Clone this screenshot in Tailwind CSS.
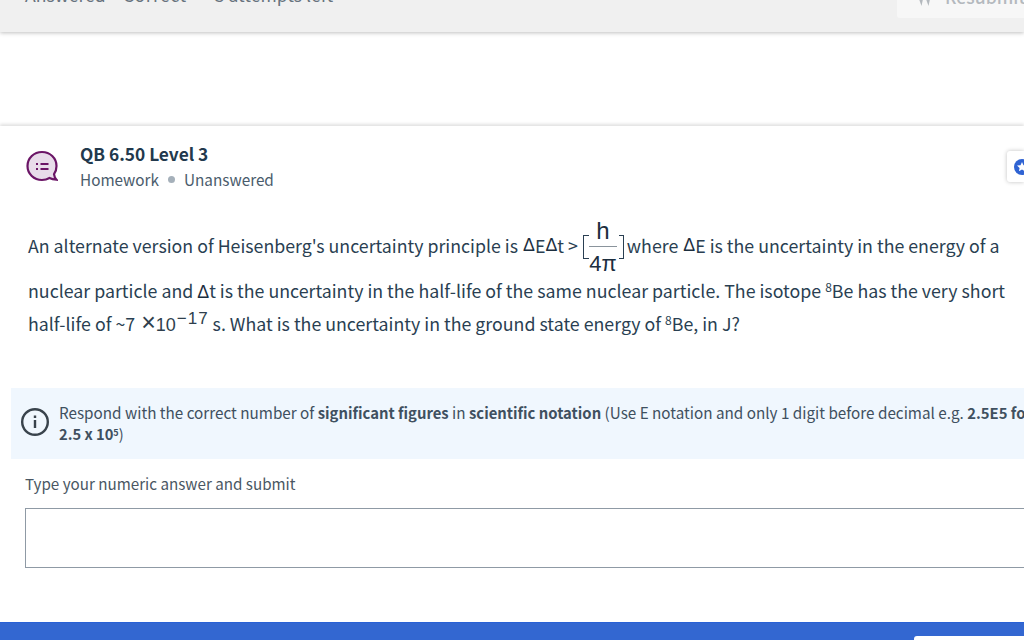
<!DOCTYPE html>
<html lang="en">
<head>
  <meta charset="UTF-8">
  <title>QB 6.50 Level 3</title>
  <script src="https://cdn.jsdelivr.net/npm/@tailwindcss/browser@4"></script>
</head>
<body class="bg-white h-[640px] w-[1024px] overflow-hidden font-['Noto_Sans_CJK_SC','Source_Sans_Pro',sans-serif] text-[#2a3f52]">

  <!-- top bar -->
  <div class="h-[32px] bg-[#f0f0f0] shadow-[0_1px_4px_rgba(0,0,0,0.25)] flex justify-between overflow-hidden relative z-10">
    <div class="text-[17.6px] leading-[20px] mt-[-15px] ml-[25px] text-[#67737e] flex whitespace-nowrap">
      <span>Answered</span><span class="ml-[17px] tracking-[0.5px]">Correct</span><span class="ml-[28px]">3 attempts left</span>
    </div>
    <div class="w-[127px] h-[18px] bg-[#f7f7f7] rounded-bl-[3px] flex gap-[14px] pl-[22px] overflow-hidden shrink-0">
      <svg width="12" height="8" viewBox="0 0 12 8" class="mt-[-1px] shrink-0"><path d="M0 0h4l-1.500 7zM7 0h4l-1.500 7z" fill="#b4b9be"/></svg>
      <span class="text-[17.6px] leading-[20px] mt-[-13px] text-[#b4b9be] font-medium">Resubmit</span>
    </div>
  </div>

  <!-- card -->
  <div class="mt-[94px] h-[496px] shadow-[0_-2px_3px_rgba(0,0,0,0.12)] bg-white relative overflow-x-clip">
    <div class="flex pt-[16px] pl-[26px]">
      <svg width="32" height="32" viewBox="0 0 32 32" class="mt-[8px]">
        <path d="M16 2C8 2 1.500 8 1.500 16S8 30 16 30c3 0 5.500-.8 7.500-2 2 1 4.500 1.500 7 1.700-1.500-1.500-2.300-3.500-2.500-5.500 1.800-2.400 2.500-5 2.500-8.200C30.500 8 24 2 16 2z" fill="#e8dcea" stroke="#6b1566" stroke-width="2.200"/>
        <path d="M10 13h2v2h-2zM10 18h2v2h-2zM14.500 13h8v2h-8zM14.500 18h8v2h-8z" fill="#6b1566"/>
      </svg>
      <div class="ml-[22px]">
        <div class="text-[17.3px] leading-[24px] font-semibold text-[#22394d]">QB 6.50 Level 3</div>
        <div class="flex items-center text-[15.3px] leading-[24px] mt-[1px] text-[#4a5c6c]">
          <span>Homework</span>
          <span class="w-[7px] h-[7px] rounded-full bg-[#a5b0ba] ml-[9px] mr-[9px]"></span>
          <span>Unanswered</span>
        </div>
      </div>
    </div>

    <!-- pin tab -->
    <div class="absolute right-0 top-[25px] w-[17px] h-[31px] bg-white rounded-l-[3px] shadow-[0_0_4px_rgba(0,0,0,0.25)] overflow-hidden">
      <svg width="16" height="16" viewBox="0 0 16 16" class="ml-[7px] mt-[8px]">
        <circle cx="8" cy="8" r="8" fill="#2f63d3"/>
        <path d="M8 3l1.500 3.200 3.500.4-2.600 2.300.7 3.400L8 10.600 4.900 12.300l.7-3.400L3 6.600l3.500-.4z" fill="#fff"/>
      </svg>
    </div>

    <!-- question -->
    <div class="pl-[28px] w-[1024px] text-[17.8px] leading-[33px] mt-[22px]">
      <div class="flex items-center h-[64px] whitespace-nowrap">
        <span class="text-[17.75px]">An alternate version of Heisenberg's uncertainty principle is</span>
        <span class="ml-[5px] font-['Liberation_Sans',sans-serif] text-[#1c2e3e]">Δ</span><span>E</span><span class="font-['Liberation_Sans',sans-serif] text-[#1c2e3e]">Δ</span><span>t</span>
        <span class="ml-[4px]">&gt;</span>
        <span class="w-[6px] h-[24px] ml-[5px] mt-[4px] border-l border-t border-b border-[#2a3f52]"></span>
        <span class="flex flex-col items-center w-[28px] mt-[3px] font-['Liberation_Sans',sans-serif] text-[#1c2e3e]">
          <span class="leading-[31px] h-[31px] text-[24px]">h</span>
          <span class="w-[28px] h-px bg-[#8a949c]"></span>
          <span class="leading-[34px] h-[31px] text-[22px]">4π</span>
        </span>
        <span class="w-[5px] h-[24px] ml-[2px] mt-[4px] border-r border-t border-b border-[#2a3f52]"></span>
        <span class="ml-[3px]">where</span>
        <span class="ml-[5px] font-['Liberation_Sans',sans-serif] text-[#1c2e3e]">Δ</span><span>E is the uncertainty in the energy of a</span>
      </div>
      <div class="mt-[-3px] h-[33px] whitespace-nowrap">nuclear particle and <span class="font-['Liberation_Sans',sans-serif] text-[#1c2e3e]">Δ</span>t is the uncertainty in the half-life of the same nuclear particle. The isotope <sup class="text-[12px] leading-none">8</sup>Be has the very short</div>
      <div class="h-[33px] whitespace-nowrap">half-life of ~7 <span class="ml-[2px] font-['Liberation_Sans',sans-serif] text-[#2f3f4d] text-[18px] font-light"><span class="text-[25px] leading-none">×</span>10<span class="text-[17px] leading-none align-[7px] ml-px tracking-[1px]">−17</span></span> s. What is the uncertainty in the ground state energy of <sup class="text-[12px] leading-none">8</sup>Be, in J?</div>
    </div>

    <!-- info -->
    <div class="ml-[11px] mt-[48px] w-[1100px] h-[71px] bg-[#f0f7fe] flex pt-[14px] pl-[9px] text-[15.25px] leading-[21px] text-[#3f5060]">
      <svg width="30" height="30" viewBox="0 0 30 30" class="mt-[5px] shrink-0">
        <circle cx="15" cy="15" r="12.800" fill="none" stroke="#39434c" stroke-width="2.400"/>
        <path d="M13.800 8.500h2.400v2.400h-2.400zM13.800 13h2.400v8h-2.400z" fill="#39434c"/>
      </svg>
      <div class="ml-[9px] whitespace-nowrap">
        <div>Respond with the correct number of <b class="font-semibold text-[14.85px]">significant figures</b> in <b class="font-semibold text-[14.85px]">scientific notation</b> (Use E notation and only 1 digit before decimal e.g. <b class="font-semibold text-[14.85px]">2.5E5 for</b></div>
        <div class="text-[14.7px]"><b class="font-semibold">2.5 x 10<sup class="text-[9px] leading-none">5</sup></b>)</div>
      </div>
    </div>

    <div class="ml-[25px] mt-[13px] text-[15.2px] leading-[22px] text-[#4a5763]">Type your numeric answer and submit</div>

    <div class="ml-[25px] mt-[14px] w-[1020px] h-[60px] border border-[#8f9aa5] bg-white"></div>
  </div>

  <!-- bottom bar -->
  <div class="h-[18px] bg-[#3367d1] border-t border-[#2a62d6] flex justify-end pt-[13px]">
    <div class="w-[110px] h-[10px] bg-white rounded-tl-[3px]"></div>
  </div>

</body>
</html>
